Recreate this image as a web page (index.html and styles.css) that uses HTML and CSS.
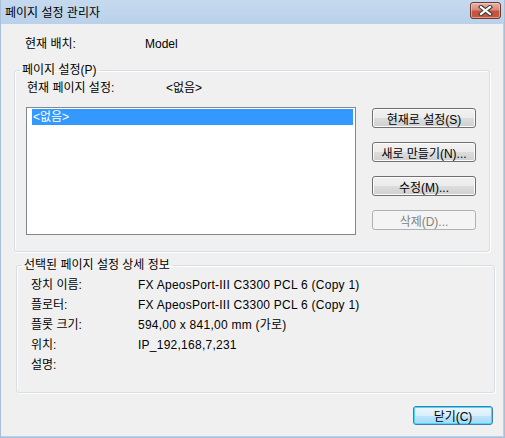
FILE: index.html
```html
<!DOCTYPE html>
<html lang="ko">
<head>
    <meta charset="UTF-8">
    <title>페이지 설정 관리자</title>
    <link rel="stylesheet" href="styles.css">
</head>
<body>
    <div class="window">
        <div class="titlebar">
            <span class="title">페이지 설정 관리자</span>
            <button class="close-btn">
                <svg width="15" height="11" viewBox="0 0 15 11">
                    <path d="M3 2 L12 9 M12 2 L3 9" stroke="#3b3b3b" stroke-width="4.2" stroke-linecap="square"/>
                    <path d="M3 2 L12 9 M12 2 L3 9" stroke="#ffffff" stroke-width="2.2" stroke-linecap="square"/>
                </svg>
            </button>
        </div>
        <div class="client">
            <div class="layout-row">
                <span class="layout-label">현재 배치:</span>
                <span>Model</span>
            </div>

            <fieldset class="group setup-group">
                <legend>페이지 설정(P)</legend>
                <div class="current-row">
                    <span class="current-label">현재 페이지 설정:</span>
                    <span>&lt;없음&gt;</span>
                </div>
                <div class="setup-body">
                    <div class="setup-list">
                        <div class="list-item selected">&lt;없음&gt;</div>
                    </div>
                    <div class="setup-buttons">
                        <button class="btn">현재로 설정(S)</button>
                        <button class="btn">새로 만들기(N)...</button>
                        <button class="btn">수정(M)...</button>
                        <button class="btn" disabled>삭제(D)...</button>
                    </div>
                </div>
            </fieldset>

            <fieldset class="group detail-group">
                <legend>선택된 페이지 설정 상세 정보</legend>
                <div class="detail-list">
                    <div class="detail-row"><span class="detail-label">장치 이름:</span><span class="detail-value">FX ApeosPort-III C3300 PCL 6 (Copy 1)</span></div>
                    <div class="detail-row"><span class="detail-label">플로터:</span><span class="detail-value">FX ApeosPort-III C3300 PCL 6 (Copy 1)</span></div>
                    <div class="detail-row"><span class="detail-label">플롯 크기:</span><span class="detail-value">594,00 x 841,00 mm (가로)</span></div>
                    <div class="detail-row"><span class="detail-label">위치:</span><span class="detail-value">IP_192,168,7,231</span></div>
                    <div class="detail-row"><span class="detail-label">설명:</span><span class="detail-value"></span></div>
                </div>
            </fieldset>

            <div class="footer">
                <button class="btn default-btn">닫기(C)</button>
            </div>
        </div>
    </div>
</body>
</html>
```

FILE: styles.css
```css
body {
    margin: 0;
    padding: 0;
    font-family: "Liberation Sans", "Noto Sans CJK KR", sans-serif;
    font-size: 12px;
    color: #000;
}

.window {
    width: 505px;
    height: 438px;
    background-color: #b9d1ea;
    box-sizing: border-box;
    border: 1px solid #a8c0da;
    border-top: none;
}

.titlebar {
    height: 24px;
    display: flex;
    align-items: center;
    justify-content: space-between;
    padding: 0 3px 0 4px;
    background: linear-gradient(#c6d9ee, #b9d1ea);
}

.title {
    font-size: 12px;
    line-height: 14px;
    margin-top: 1px;
}

.close-btn {
    width: 31px;
    height: 17px;
    margin-top: -3px;
    padding: 0;
    display: flex;
    align-items: center;
    justify-content: center;
    border: 1px solid #6b3a33;
    border-radius: 3px;
    background: linear-gradient(#e8b3a7 0%, #d88a78 45%, #c7543e 55%, #c7563f 100%);
    box-shadow: inset 0 0 0 1px rgba(255, 220, 210, 0.5);
}

.client {
    height: 412px;
    margin-right: 1px;
    background-color: #f0f0f0;
}

.layout-row {
    display: flex;
    padding: 13px 0 0 24px;
    line-height: 14px;
}

.layout-label {
    width: 120px;
}

.group {
    margin: 0;
    padding: 0;
    border: 1px solid #d5dfe5;
    border-radius: 3px;
    box-shadow: 1px 1px 0 #fff, inset 1px 1px 0 #fff;
    min-width: 0;
}

.group legend {
    margin-left: 5px;
    padding: 0 2px;
    line-height: 14px;
}

.setup-group {
    margin: 12px 0 0 13px;
    width: 476px;
    box-sizing: border-box;
    padding-bottom: 16px;
}

.current-row {
    display: flex;
    margin: 4px 0 0 12px;
    line-height: 14px;
}

.current-label {
    width: 139px;
}

.setup-body {
    display: flex;
    gap: 16px;
    margin: 12px 0 0 11px;
}

.setup-list {
    width: 330px;
    height: 128px;
    box-sizing: border-box;
    border: 1px solid #828790;
    background-color: #fff;
    padding: 1px 2px 0 5px;
}

.list-item {
    height: 16px;
    line-height: 16px;
    padding-left: 1px;
}

.list-item.selected {
    background-color: #3399ff;
    color: #fff;
}

.setup-buttons {
    display: flex;
    flex-direction: column;
    gap: 14px;
    padding-top: 1px;
}

.btn {
    width: 104px;
    height: 20px;
    padding: 0;
    font-family: "Liberation Sans", "Noto Sans CJK KR", sans-serif;
    font-size: 12px;
    color: #000;
    border: 1px solid #707070;
    border-radius: 3px;
    background: linear-gradient(#f2f2f2 0%, #ebebeb 50%, #dddddd 50%, #cfcfcf 100%);
    box-shadow: inset 0 0 0 1px #fcfcfc;
}

.btn:disabled {
    color: #838383;
    border-color: #adb2b5;
    background: #f4f4f4;
    box-shadow: none;
}

.detail-group {
    margin: 6px 0 0 15px;
    width: 479px;
    box-sizing: border-box;
    padding-bottom: 17px;
}

.detail-list {
    margin: 3px 0 0 14px;
}

.detail-row {
    display: flex;
    height: 20px;
    line-height: 20px;
}

.detail-label {
    width: 107px;
}

.detail-value {
    letter-spacing: 0.25px;
}

.footer {
    display: flex;
    justify-content: flex-end;
    margin: 13px 10px 0 0;
}

.default-btn {
    width: 80px;
    height: 19px;
    border-color: #3c7fb1;
    background: linear-gradient(#eaf6fd 0%, #d9f0fc 50%, #bee6fd 50%, #a7d9f5 100%);
    box-shadow: inset 0 0 0 1px #48d8fb;
}
```
